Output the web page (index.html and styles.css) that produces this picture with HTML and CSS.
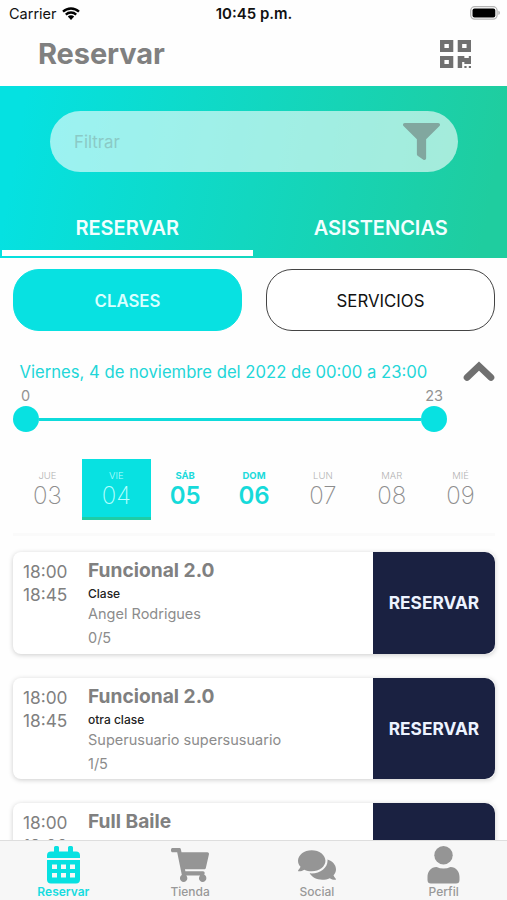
FILE: index.html
```html
<!DOCTYPE html>
<html lang="es">
<head>
  <meta charset="UTF-8" />
  <meta name="viewport" content="width=device-width, initial-scale=1.0"/>
  <title>Reservar</title>
  <link rel="stylesheet" href="styles.css">
</head>
<body>
  <div class="app">
    <div class="status-bar">
      <div class="carrier">
        <span>Carrier</span>
        <svg class="wifi" viewBox="0 0 18 13">
          <path d="M1 4.7a11.6 11.6 0 0 1 16 0M3.8 7.6a7.5 7.5 0 0 1 10.4 0" fill="none" stroke="#000" stroke-width="2.3"/>
          <path d="M5.8 9.6a4.6 4.6 0 0 1 6.4 0L9 12.9z"/>
        </svg>
      </div>
      <div class="clock">10:45 p.m.</div>
      <svg class="battery" viewBox="0 0 31 14">
        <rect x=".7" y=".7" width="26.4" height="12.4" rx="4" fill="#fff" stroke="#b5b5b5" stroke-width="1.3"/>
        <rect x="2.5" y="2.5" width="22.8" height="8.9" rx="2"/>
        <path d="M28.3 4.8c2.2.6 2.2 3.6 0 4.2z" fill="#b5b5b5"/>
      </svg>
    </div>

    <header>
      <h1>Reservar</h1>
      <svg class="qr" viewBox="0 32 448 448" preserveAspectRatio="none">
        <path d="M0 224h192V32H0v192zM64 96h64v64H64V96zm192-64v192h192V32H256zm128 128h-64V96h64v64zM0 480h192V288H0v192zm64-128h64v64H64v-64zm352-64h32v128h-96v-32h-32v96h-64V288h96v32h64v-32zm0 160h32v32h-32v-32zm-64 0h32v32h-32v-32z"/>
      </svg>
    </header>

    <section class="hero">
      <div class="search">
        <span>Filtrar</span>
        <svg viewBox="0 0 512 512">
          <path d="M487.976 0H24.028C2.71 0-8.047 25.866 7.058 40.971L192 225.941V432c0 7.831 3.821 15.17 10.237 19.662l80 55.98C298.02 518.69 320 507.493 320 487.98V225.941l184.947-184.97C520.021 25.896 509.338 0 487.976 0z"/>
        </svg>
      </div>
      <nav class="tabs">
        <a class="tab active"><span>RESERVAR</span></a>
        <a class="tab"><span>ASISTENCIAS</span></a>
      </nav>
    </section>

    <div class="types">
      <button class="type selected"><span>CLASES</span></button>
      <button class="type"><span>SERVICIOS</span></button>
    </div>

    <section class="range">
      <div class="range-head">
        <p>Viernes, 4 de noviembre del 2022 de 00:00 a 23:00</p>
        <svg viewBox="0 0 32 20">
          <path d="M4 16.500 16 5l12 11.500" fill="none" stroke="#707070" stroke-width="6.600" stroke-linecap="round"/>
        </svg>
      </div>
      <div class="range-labels">
        <span>0</span>
        <span>23</span>
      </div>
      <div class="slider">
        <i class="thumb"></i>
        <i class="track"></i>
        <i class="thumb"></i>
      </div>
    </section>

    <div class="week">
      <div class="day"><small>JUE</small><b>03</b></div>
      <div class="day current"><small>VIE</small><b>04</b></div>
      <div class="day open"><small>SÁB</small><b>05</b></div>
      <div class="day open"><small>DOM</small><b>06</b></div>
      <div class="day"><small>LUN</small><b>07</b></div>
      <div class="day"><small>MAR</small><b>08</b></div>
      <div class="day"><small>MIÉ</small><b>09</b></div>
    </div>

    <main class="list">
      <article class="card">
        <div class="hours"><span>18:00</span><span>18:45</span></div>
        <div class="info">
          <h2>Funcional 2.0</h2>
          <h3>Clase</h3>
          <p>Angel Rodrigues</p>
          <p class="spots">0/5</p>
        </div>
        <button class="book"><span>RESERVAR</span></button>
      </article>
      <article class="card">
        <div class="hours"><span>18:00</span><span>18:45</span></div>
        <div class="info">
          <h2>Funcional 2.0</h2>
          <h3>otra clase</h3>
          <p>Superusuario supersusuario</p>
          <p class="spots">1/5</p>
        </div>
        <button class="book"><span>RESERVAR</span></button>
      </article>
      <article class="card">
        <div class="hours"><span>18:00</span><span>19:00</span></div>
        <div class="info">
          <h2>Full Baile</h2>
        </div>
        <button class="book"></button>
      </article>
    </main>

    <nav class="bottom-nav">
      <a class="nav-item active">
        <svg width="33" height="38" viewBox="0 0 33 38">
          <path d="M0 9.500Q0 5.500 4 5.500H7V1.500Q7 0 8.500 0H10.500Q12 0 12 1.500V5.500H21V1.500Q21 0 22.500 0H24.500Q26 0 26 1.500V5.500H29Q33 5.500 33 9.500V12H0z"/>
          <path fill-rule="evenodd" d="M0 14H33V33.500Q33 37.500 29 37.500H4Q0 37.500 0 33.500zM5 18.500v4.500h5v-4.500zm9 0v4.500h5v-4.500zm9 0v4.500h5v-4.500zM5 27v4.500h5V27zm9 0v4.500h5V27zm9 0v4.500h5V27z"/>
        </svg>
        <span>Reservar</span>
      </a>
      <a class="nav-item">
        <svg width="38" height="34" viewBox="0 0 576 512">
          <path d="M528.12 301.319l47.273-208C578.806 78.301 567.391 64 551.99 64H159.208l-9.166-44.81C147.758 8.021 137.93 0 126.529 0H24C10.745 0 0 10.745 0 24v16c0 13.255 10.745 24 24 24h69.883l70.248 343.435C147.325 417.1 136 435.222 136 456c0 30.928 25.072 56 56 56s56-25.072 56-56c0-15.674-6.447-29.835-16.824-40h209.647C430.447 426.165 424 440.326 424 456c0 30.928 25.072 56 56 56s56-25.072 56-56c0-22.172-12.888-41.332-31.579-50.405l5.517-24.276c3.413-15.018-8.002-29.319-23.403-29.319H218.117l-6.545-32h293.145c11.206 0 20.92-7.754 23.403-18.681z"/>
        </svg>
        <span>Tienda</span>
      </a>
      <a class="nav-item">
        <svg width="38" height="34" viewBox="0 0 576 512">
          <path d="M416 192c0-88.400-93.100-160-208-160S0 103.600 0 192c0 34.300 14.100 65.900 38 92-13.400 30.200-35.500 54.200-35.800 54.500-2.200 2.300-2.800 5.700-1.500 8.700S4.800 352 8 352c36.600 0 66.900-12.300 88.700-25 32.200 15.700 70.300 25 111.300 25 114.900 0 208-71.600 208-160zm122 220c23.900-26 38-57.700 38-92 0-66.900-53.500-124.200-129.300-148.100.9 6.600 1.300 13.300 1.300 20.100 0 105.900-107.700 192-240 192-10.800 0-21.300-.8-31.700-1.900C207.800 439.600 281.800 480 368 480c41 0 79.100-9.200 111.300-25 21.800 12.700 52.100 25 88.700 25 3.200 0 6.100-1.900 7.300-4.800 1.300-2.900.7-6.300-1.500-8.700-.3-.3-22.400-24.200-35.800-54.500z"/>
        </svg>
        <span>Social</span>
      </a>
      <a class="nav-item">
        <svg width="33" height="38" viewBox="0 0 33 38">
          <circle cx="16.500" cy="9.300" r="9.200"/>
          <path d="M9.500 21Q16.500 24 23.500 21C29 21 32.500 25.500 32.500 31V34Q32.500 37.500 29 37.500H4Q.5 37.500.5 34V31C.5 25.500 4 21 9.500 21z"/>
        </svg>
        <span>Perfil</span>
      </a>
    </nav>
  </div>
</body>
</html>
```
FILE: styles.css
```css
* {
  box-sizing: border-box;
}

body {
  margin: 0;
  font-family: Inter, "Liberation Sans", sans-serif;
  background: #fefefe;
  color: #808080;
}

h1, h2, h3, p {
  margin: 0;
}

button {
  font-family: inherit;
  padding: 0;
  border: 0;
}

span {
  white-space: nowrap;
}

.app {
  height: 900px;
  display: flex;
  flex-direction: column;
  overflow: hidden;
}

.app > * {
  flex-shrink: 0;
}

.status-bar {
  height: 28px;
  padding: 0 6px 0 9px;
  display: grid;
  grid-template-columns: 1fr auto 1fr;
  align-items: center;
  color: #111;
  font-size: 14.500px;
  line-height: 28px;
}

.carrier {
  display: flex;
  align-items: center;
  gap: 5px;
}

.wifi {
  width: 18px;
  height: 13px;
  margin-top: -2px;
}

.clock {
  margin-left: -2px;
  font-weight: 600;
  font-size: 15px;
}

.battery {
  width: 31px;
  height: 14px;
  justify-self: end;
  margin-top: -2px;
}

header {
  height: 58px;
  padding: 0 36.500px 7px 38px;
  display: flex;
  align-items: center;
  justify-content: space-between;
}

h1 {
  font-size: 29px;
  line-height: 36px;
  font-weight: 700;
  letter-spacing: -0.1px;
}

.qr {
  width: 31px;
  height: 28px;
  fill: #707070;
}

.hero {
  height: 172px;
  padding-top: 25px;
  background: linear-gradient(100deg, #05e1e1 5%, #1fcd9f 95%);
}

.search {
  height: 61px;
  margin: 0 49px 0 50px;
  padding: 0 18px 0 24px;
  border-radius: 31px;
  background: rgba(255, 255, 255, 0.6);
  display: flex;
  align-items: center;
  justify-content: space-between;
  font-size: 16.800px;
  color: #8bcac6;
}

.search svg {
  width: 37px;
  height: 37px;
  fill: #81a79f;
}

.tabs {
  height: 86px;
  display: flex;
}

.tab {
  flex: 1;
  margin: 0 1px 2px 2px;
  padding-top: 39px;
  text-align: center;
  color: #f2ffff;
  font-size: 20px;
  line-height: 34px;
  font-weight: 600;
  border-bottom: 6px solid transparent;
}

.tab.active {
  border-bottom-color: #fff;
}

.types {
  display: flex;
  gap: 24px;
  padding: 11px 12px 0 13px;
}

.type {
  flex: 1;
  height: 62px;
  padding-top: 1px;
  border: 1.500px solid #444;
  border-radius: 26px;
  background: #fff;
  color: #111;
  font-size: 16.800px;
}

.type.selected {
  background: #08e1e1;
  border-color: #08e1e1;
  color: #d8ffff;
  font-weight: 600;
}

.range {
  padding: 28px 12px 0 13px;
}

.range-head {
  height: 24px;
  padding-left: 6.500px;
  display: flex;
  align-items: center;
  justify-content: space-between;
  color: #22d6d8;
  font-size: 16.650px;
  white-space: nowrap;
}

.range-head p {
  padding-top: 2px;
}

.range-head svg {
  width: 32px;
  height: 20px;
}

.range-labels {
  width: 434px;
  padding: 3px 4px 0 8px;
  display: flex;
  justify-content: space-between;
  font-size: 14.500px;
  line-height: 20px;
  color: #929292;
}

.slider {
  width: 434px;
  display: flex;
  align-items: center;
}

.thumb {
  width: 26px;
  height: 26px;
  border-radius: 50%;
  background: #08e1e1;
}

.track {
  flex: 1;
  height: 3px;
  background: #0fdbdb;
}

.week {
  margin: 27px 12px 0 13px;
  height: 77px;
  display: flex;
  border-bottom: 3px solid #fafafa;
}

.day {
  flex: 1;
  height: 61px;
  padding-top: 10px;
  text-align: center;
  color: #b2b2b2;
}

.day small {
  display: block;
  font-size: 9.500px;
  line-height: 13px;
  font-weight: 300;
}

.day b {
  display: block;
  font-size: 24px;
  line-height: 28px;
  font-weight: 200;
  color: #8d8d8d;
}

.day.current {
  background: #08e1e1;
  border-bottom: 3px solid #1ecda6;
}

.day.current small,
.day.current b {
  color: #b5ffff;
}

.day.open small {
  font-weight: 700;
  color: #20dadb;
}

.day.open b {
  font-weight: 600;
  color: #16dada;
}

.list {
  flex: 1 1 0;
  min-height: 0;
  overflow: hidden;
  padding: 16px 12px 0 13px;
}

.card {
  height: 101.500px;
  margin-bottom: 24px;
  display: flex;
  border-radius: 8px;
  background: #fff;
  box-shadow: 0 1px 5px rgba(0, 0, 0, 0.2);
}

.hours {
  width: 75px;
  padding: 8px 0 0 10px;
  display: flex;
  flex-direction: column;
  font-size: 17.300px;
  line-height: 23px;
}

.info {
  flex: 1;
  padding-top: 6px;
}

.info h2 {
  font-size: 19.200px;
  line-height: 25px;
  font-weight: 700;
}

.info h3 {
  font-size: 12px;
  line-height: 21px;
  font-weight: 500;
  color: #222;
}

.info p {
  font-size: 14.500px;
  line-height: 19px;
  color: #8c8c8c;
}

.info .spots {
  padding-top: 5px;
}

.book {
  width: 122px;
  background: #1a2141;
  border-radius: 0 10px 10px 0;
  color: #edf3ff;
  font-size: 17.300px;
  font-weight: 700;
}

.bottom-nav {
  height: 60px;
  display: flex;
  background: #f7f7f7;
  border-top: 1px solid #dedede;
}

.nav-item {
  flex: 1;
  padding-top: 5px;
  display: flex;
  flex-direction: column;
  align-items: center;
  justify-content: space-between;
  color: #999;
  fill: #959595;
  font-size: 12px;
  line-height: 16px;
  font-weight: 500;
}

.nav-item svg {
  margin: auto 0;
}

.nav-item.active {
  color: #16dce0;
  fill: #08e1e1;
  font-weight: 600;
}
```
